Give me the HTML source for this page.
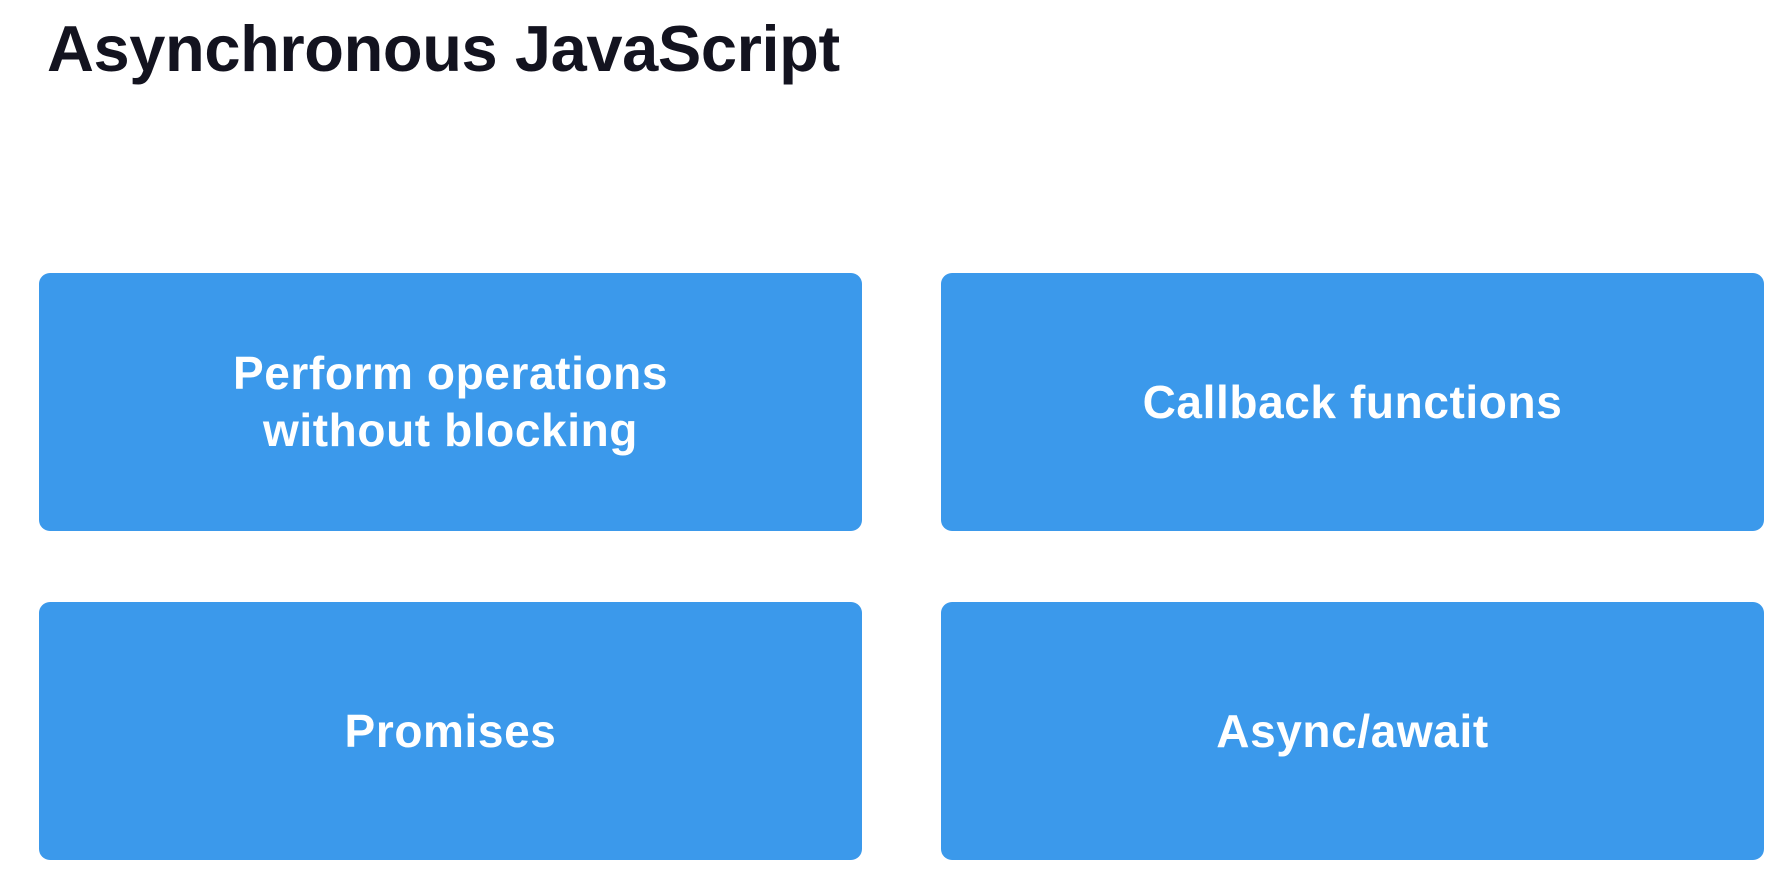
<!DOCTYPE html>
<html><head><style>
html,body{margin:0;padding:0;background:#fff;width:1787px;height:883px;overflow:hidden;font-family:"Liberation Sans",sans-serif}
h1{position:absolute;left:47px;top:9px;margin:0;font-size:65px;font-weight:bold;color:#13131f;letter-spacing:-0.4px;line-height:80px}
.b{position:absolute;width:823px;height:258px;background:#3b99eb;border-radius:11px;display:flex;align-items:center;justify-content:center;text-align:center;color:#fff;font-weight:bold;font-size:46px;line-height:57px;letter-spacing:0.6px}
</style></head><body>
<h1>Asynchronous JavaScript</h1>
<div class="b" style="left:39px;top:273px">Perform operations<br>without blocking</div>
<div class="b" style="left:941px;top:273px">Callback functions</div>
<div class="b" style="left:39px;top:602px">Promises</div>
<div class="b" style="left:941px;top:602px">Async/await</div>
</body></html>
